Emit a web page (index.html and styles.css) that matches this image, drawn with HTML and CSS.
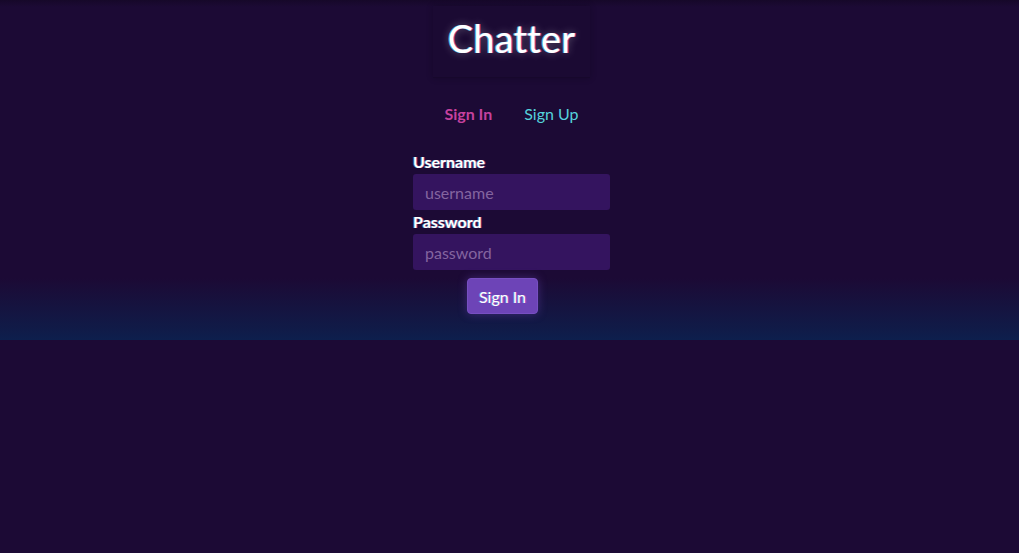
FILE: index.html
```html
<!DOCTYPE html>
<html>
<head>
<meta charset="utf-8">
<link rel="stylesheet" href="styles.css">
</head>
<body>
<div class="app">
  <header class="header">
    <h1 class="title">Chatter</h1>
  </header>
  <nav class="tabs">
    <a class="tab active">Sign In</a>
    <a class="tab">Sign Up</a>
  </nav>
  <form class="form">
    <label class="label">Username</label>
    <input class="input" type="text" placeholder="username">
    <label class="label">Password</label>
    <input class="input" type="password" placeholder="password">
    <button class="btn" type="button">Sign In</button>
  </form>
</div>
</body>
</html>
```
FILE: styles.css
```css
html, body {
  margin: 0;
  padding: 0;
  background: #1c0a35;
  font-family: Lato, "Noto Sans", sans-serif;
}
.app {
  height: 340px;
  box-sizing: border-box;
  padding-left: 4px;
  display: flex;
  flex-direction: column;
  align-items: center;
  background: linear-gradient(to bottom, #160829 0px, #1c0a35 7px, #1c0a35 278px, #101b48 330px, #0d1f4d 340px);
}
.header {
  width: 157px;
  height: 71px;
  margin-top: 6px;
  display: flex;
  justify-content: center;
  align-items: center;
  background: #1b0a33;
  border-bottom: 1px solid #17082c;
  box-shadow: 0 0 6px rgba(10, 2, 20, 0.3);
}
.title {
  margin: 0;
  margin-top: -8px;
  font-size: 38px;
  font-weight: 400;
  color: #fff;
  letter-spacing: 0.2px;
  text-shadow: -1px 0 0 rgba(80, 230, 255, 0.7), 1px 0 0 rgba(255, 90, 200, 0.7), 0 0 8px rgba(255, 255, 255, 0.35);
}
.tabs {
  display: flex;
  gap: 32px;
  margin-top: 26px;
}
.tab {
  font-size: 16px;
  color: #55d3dc;
  cursor: pointer;
}
.tab.active {
  color: #c6419e;
  font-weight: 700;
}
.form {
  width: 197px;
  margin-top: 39px;
  display: flex;
  flex-direction: column;
}
.label {
  font-size: 16px;
  font-weight: 700;
  color: #fff;
  line-height: 20px;
  height: 22px;
  margin-top: -10px;
  text-shadow: -1px 0 0 rgba(80, 230, 255, 0.45), 1px 0 0 rgba(255, 90, 200, 0.45);
}
.input {
  height: 36px;
  box-sizing: border-box;
  border: none;
  border-radius: 3px;
  background: #34145f;
  color: #fff;
  font-family: Lato, "Noto Sans", sans-serif;
  font-size: 16px;
  padding: 0 12px;
  margin-bottom: 12px;
  outline: none;
}
.input::placeholder {
  color: #84659f;
}
.btn {
  align-self: center;
  width: 71px;
  height: 36px;
  margin-top: -4px;
  margin-right: 18px;
  border: 1px solid #774fc2;
  border-radius: 4px;
  background: #6d44b7;
  color: #fff;
  font-family: Lato, "Noto Sans", sans-serif;
  font-size: 16px;
  box-shadow: 0 0 10px rgba(120, 80, 200, 0.4);
  text-shadow: -1px 0 0 rgba(80, 230, 255, 0.4), 1px 0 0 rgba(255, 90, 200, 0.4);
  cursor: pointer;
}
```
